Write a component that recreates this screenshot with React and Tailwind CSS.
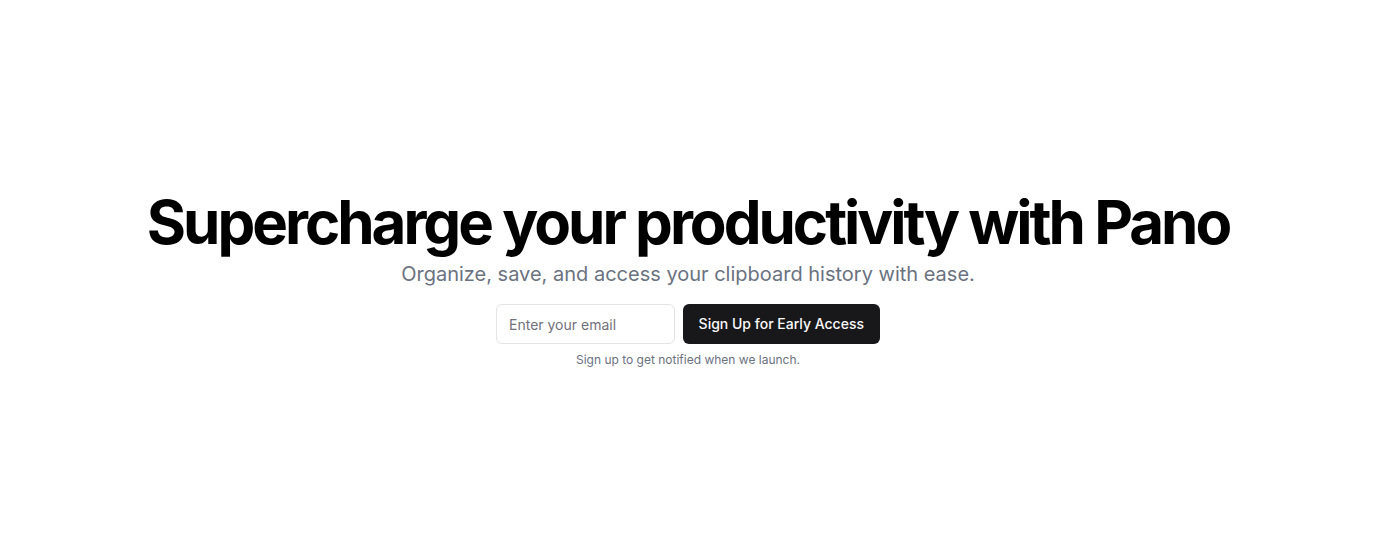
export default function App() {
  return (
    <main className="flex min-h-screen items-center justify-center bg-white px-4 font-['Inter',sans-serif] text-black md:px-6">
      <section className="flex flex-col items-center space-y-4 text-center">
        <div className="space-y-2">
          <h1 className="text-6xl leading-none font-bold tracking-tighter">
            Supercharge your productivity with Pano
          </h1>
          <p className="text-xl text-[#6b7280]">
            Organize, save, and access your clipboard history with ease.
          </p>
        </div>
        <div className="w-full max-w-sm space-y-2">
          <form className="flex space-x-2" onSubmit={(e) => e.preventDefault()}>
            <input
              type="email"
              aria-label="Email address"
              placeholder="Enter your email"
              className="h-10 min-w-0 flex-1 rounded-md border border-[#e4e4e7] bg-white px-3 py-2 text-sm placeholder:text-[#71717a]"
            />
            <button
              type="submit"
              className="inline-flex h-10 items-center justify-center rounded-md bg-[#18181b] px-4 py-2 text-sm font-medium whitespace-nowrap text-[#fafafa]"
            >
              Sign Up for Early Access
            </button>
          </form>
          <p className="text-xs text-[#6b7280]">
            Sign up to get notified when we launch.
          </p>
        </div>
      </section>
    </main>
  );
}
